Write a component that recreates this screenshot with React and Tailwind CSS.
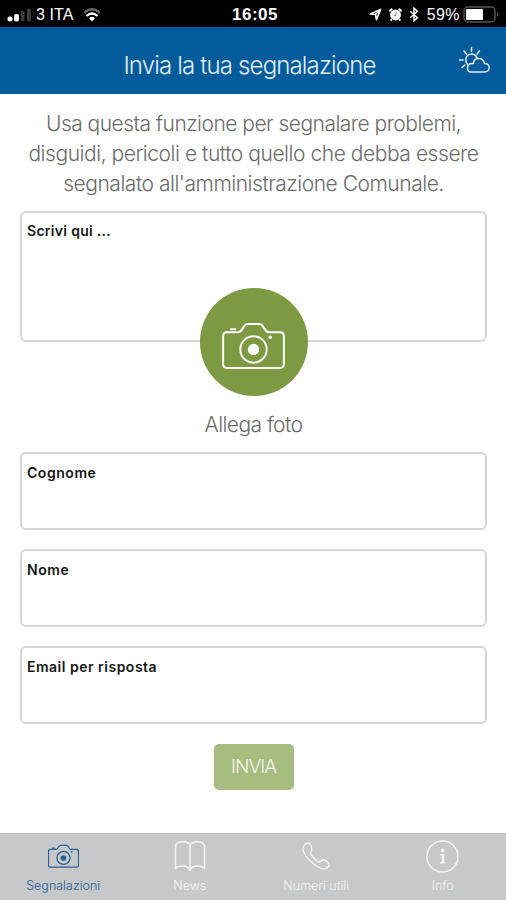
function Camera({ className, stroke = 2 }) {
  return (
    <svg viewBox="0 0 64 48" className={className} fill="none" stroke="currentColor" strokeWidth={stroke} strokeLinejoin="round" strokeLinecap="round">
      <path d="M5 10.500h11.500c4.500 0 4.500-8 9-8.500h13c4.500.5 4.500 8.500 9 8.500H59c2.500 0 4 1.500 4 4V43c0 2.500-1.500 4-4 4H5c-2.500 0-4-1.500-4-4V14.500c0-2.500 1.500-4 4-4z" />
      <path d="M9 7.500h4.500" />
      <circle cx="32" cy="28" r="13.500" />
      <circle cx="32" cy="28" r="5.800" fill="currentColor" stroke="none" />
      <circle cx="49" cy="15.500" r="1.800" fill="currentColor" stroke="none" />
    </svg>
  );
}

function StatusBar() {
  return (
    <div className="grid h-[27px] grid-cols-3 items-center bg-black px-[7px] pt-[2px] text-[15px] leading-none text-white">
      <div className="flex items-center">
        <svg viewBox="0 0 25 14" className="h-[14px] w-[25px]">
          <rect x="0.500" y="8.500" width="5" height="5" rx="2" fill="#fff" />
          <rect x="7" y="6" width="5" height="7.500" rx="2" fill="#fff" />
          <rect x="14" y="3" width="3.500" height="10.500" rx="1" fill="#3a3a3a" />
          <rect x="20" y="0.500" width="4" height="13" rx="1" fill="#3a3a3a" />
        </svg>
        <span className="ml-[4px] whitespace-nowrap font-['Liberation_Sans',sans-serif] text-[16px] tracking-[0.1px]">3 ITA</span>
        <svg viewBox="0 0 18 14" className="ml-[9px] h-[14px] w-[18px]" fill="none" stroke="#fff" strokeWidth="2.200">
          <path d="M1.200 5Q9-2.500 16.800 5" stroke="#666" />
          <path d="M3.500 8Q9 3 14.500 8" />
          <path d="M6 10.200Q9 7.400 12 10.200L9 13.400z" fill="#fff" stroke="none" />
        </svg>
      </div>
      <div className="text-center font-['Liberation_Sans',sans-serif] text-[17px] font-bold tracking-[0.5px]">
        <span className="ml-[4px]">16:05</span>
      </div>
      <div className="flex items-center justify-end">
        <svg viewBox="0 0 14 14" className="h-[13px] w-[13px]" fill="none" stroke="#fff" strokeWidth="1.700" strokeLinejoin="round">
          <path d="M1.500 6.500L12.500 1.500L8 12.500L7 7z" />
          <path d="M7 7L12.500 1.500" />
        </svg>
        <svg viewBox="0 0 16 16" className="ml-[6px] h-[15px] w-[15px]">
          <circle cx="8" cy="8.500" r="5.800" fill="#fff" />
          <path d="M1.500 4.500L4.500 1.800M14.500 4.500L11.500 1.800M4 13L2.800 14.500M12 13L13.200 14.500" stroke="#fff" strokeWidth="2" />
          <path d="M9 5.500L8 9H6" stroke="#999" strokeWidth="1.100" fill="none" />
        </svg>
        <svg viewBox="0 0 10 16" className="ml-[6px] h-[15px] w-[10px]" fill="none" stroke="#fff" strokeWidth="1.600">
          <path d="M1 4.500L8.500 11.500L5 14.800V1.200L8.500 4.500L1 11.500" />
        </svg>
        <span className="ml-[8px] font-['Liberation_Sans',sans-serif] text-[16px] tracking-[0.4px]">59%</span>
        <svg viewBox="0 0 37 17" className="-mr-[1px] ml-[3px] h-[17px] w-[37px] shrink-0">
          <rect x="1" y="1" width="31" height="15" rx="4" fill="none" stroke="#555" strokeWidth="1.500" />
          <rect x="3" y="3" width="17" height="11" rx="1" fill="#fff" />
          <path d="M34 6q2.500 2.500 0 5z" fill="#666" />
        </svg>
      </div>
    </div>
  );
}

function Header() {
  return (
    <header className="grid h-[67px] grid-cols-[50px_1fr_50px] items-center bg-[#025c9c] pt-[10px] text-[#e4eef8]">
      <h1 className="col-start-2 -ml-[7px] whitespace-nowrap text-center text-[24px] font-light tracking-[-0.85px]">Invia la tua segnalazione</h1>
      <svg viewBox="0 0 33 28" className="-mt-[11px] ml-[2px] h-[28px] w-[33px]" fill="none" stroke="currentColor" strokeWidth="1.500" strokeLinecap="round" strokeLinejoin="round">
        <path d="M9.500 18A5.800 5.800 0 1 1 19 12" />
        <path d="M13.500 1.500v4M6 5l2.500 3M21.500 5L19 8M1.500 14h3.500M4 21.500l3-2.500" />
        <path d="M12.500 26h14c2.700 0 4.700-1.900 4.700-4.400s-2-4.300-4.700-4.200c-.5-3.200-3-5-5.800-5-3.200 0-5.200 2.300-5.400 5.200-4-.6-5.800 1.700-5.800 4.100 0 2.300 1 3.900 3 4.300z" />
      </svg>
    </header>
  );
}

function Field({ label, className }) {
  return (
    <label className={`block w-full rounded-[6px] border-2 border-[#d6d6d6] bg-white px-[5px] text-[14px] font-semibold leading-[18px] text-[#151515] ${className}`}>
      {label}
    </label>
  );
}

function Tab({ label, active, children }) {
  return (
    <div className={`flex flex-col items-center pt-[5px] ${active ? "text-[#286198]" : "text-[#f4f5f6]"}`}>
      <div className="flex h-[34px] items-center justify-center">{children}</div>
      <span className="mt-[4px] whitespace-nowrap text-[12.500px] font-light leading-[18px]">{label}</span>
    </div>
  );
}

export default function App() {
  return (
    <div className="flex h-[900px] w-[506px] flex-col overflow-hidden bg-white font-['Inter','Liberation_Sans',sans-serif]">
      <StatusBar />
      <Header />
      <main className="flex flex-1 flex-col items-center pl-[20px] pr-[19px]">
        <div className="mt-[15px] flex flex-col items-center whitespace-nowrap text-[21px] font-light leading-[30px] text-[#6a6a6a]">
          <span className="tracking-[-0.52px]">Usa questa funzione per segnalare problemi,</span>
          <span className="tracking-[-0.45px]">disguidi, pericoli e tutto quello che debba essere</span>
          <span className="tracking-[-0.47px]">segnalato all'amministrazione Comunale.</span>
        </div>
        <Field label="Scrivi qui ..." className="mt-[12px] h-[131px] pt-[9px] tracking-[0.3px]" />
        <div className="relative -mt-[54px] flex h-[108px] w-[108px] items-center justify-center rounded-full bg-[#7d9941]">
          <Camera className="mt-[6px] h-[47px] w-[63px] text-white" />
        </div>
        <span className="mt-[14px] text-[21px] font-light leading-[30px] tracking-[-0.55px] text-[#6a6a6a]">Allega foto</span>
        <Field label="Cognome" className="mt-[12px] h-[77.500px] pt-[10px] tracking-[0.55px]" />
        <Field label="Nome" className="mt-[19.500px] h-[77.500px] pt-[10px] tracking-[0.6px]" />
        <Field label="Email per risposta" className="mt-[19.500px] h-[77.500px] pt-[10px] tracking-[0.5px]" />
        <button className="mt-[20px] h-[46px] w-[80px] rounded-[5px] bg-[#a7bd80] pt-[2px] text-[19px] font-light tracking-[-1px] text-[#f5f8ef]">INVIA</button>
      </main>
      <nav className="grid h-[67px] grid-cols-4 border-t border-[#bfc0c1] bg-[#c7c8ca]">
        <Tab label="Segnalazioni" active>
          <Camera className="h-[24px] w-[31px]" stroke={2.600} />
        </Tab>
        <Tab label="News">
          <svg viewBox="0 0 32 31" className="h-[31px] w-[32px]" fill="none" stroke="currentColor" strokeWidth="1.500" strokeLinejoin="round">
            <path d="M16 5C15.500 1.500 12 .8 9 .8S2 1.500 1.500 5V27.500C3 25.500 6 25 9 25s6 1.500 7 4.500c1-3 4-4.500 7-4.500s6 .5 7.500 2.500V5C30 1.500 26 .8 23 .8S16.500 1.500 16 5zV28" />
          </svg>
        </Tab>
        <Tab label="Numeri utili">
          <svg viewBox="0 0 28 28" className="h-[28px] w-[28px]" fill="none" stroke="currentColor" strokeWidth="1.400" strokeLinejoin="round">
            <path d="M3 2.500C5 .2 7.500.5 8.700 3c1 2.200 2 4.500.5 6-1.500 1.200-1 2.500.5 4.500 2 2.600 3.700 4.300 6 6 1.700 1.200 2.700 1 4-.7 1.300-1.500 3-.9 4.800.4 2.500 1.700 3.500 3.300 2 5.300-2 2.700-5.500 3.200-10 .7C8.500 20.500 3.500 14.500 1.500 9.500.5 6.500 1.200 4.200 3 2.500z" />
          </svg>
        </Tab>
        <Tab label="Info">
          <svg viewBox="0 0 33 33" className="h-[33px] w-[33px]">
            <circle cx="16.500" cy="16.500" r="15.500" fill="none" stroke="currentColor" strokeWidth="1.500" />
            <circle cx="16.700" cy="10.500" r="1.800" fill="currentColor" />
            <path d="M14 14h4.200v8.200h1.300v1.300h-5.500v-1.300h1.700v-6.900h-1.700z" fill="currentColor" />
          </svg>
        </Tab>
      </nav>
    </div>
  );
}
